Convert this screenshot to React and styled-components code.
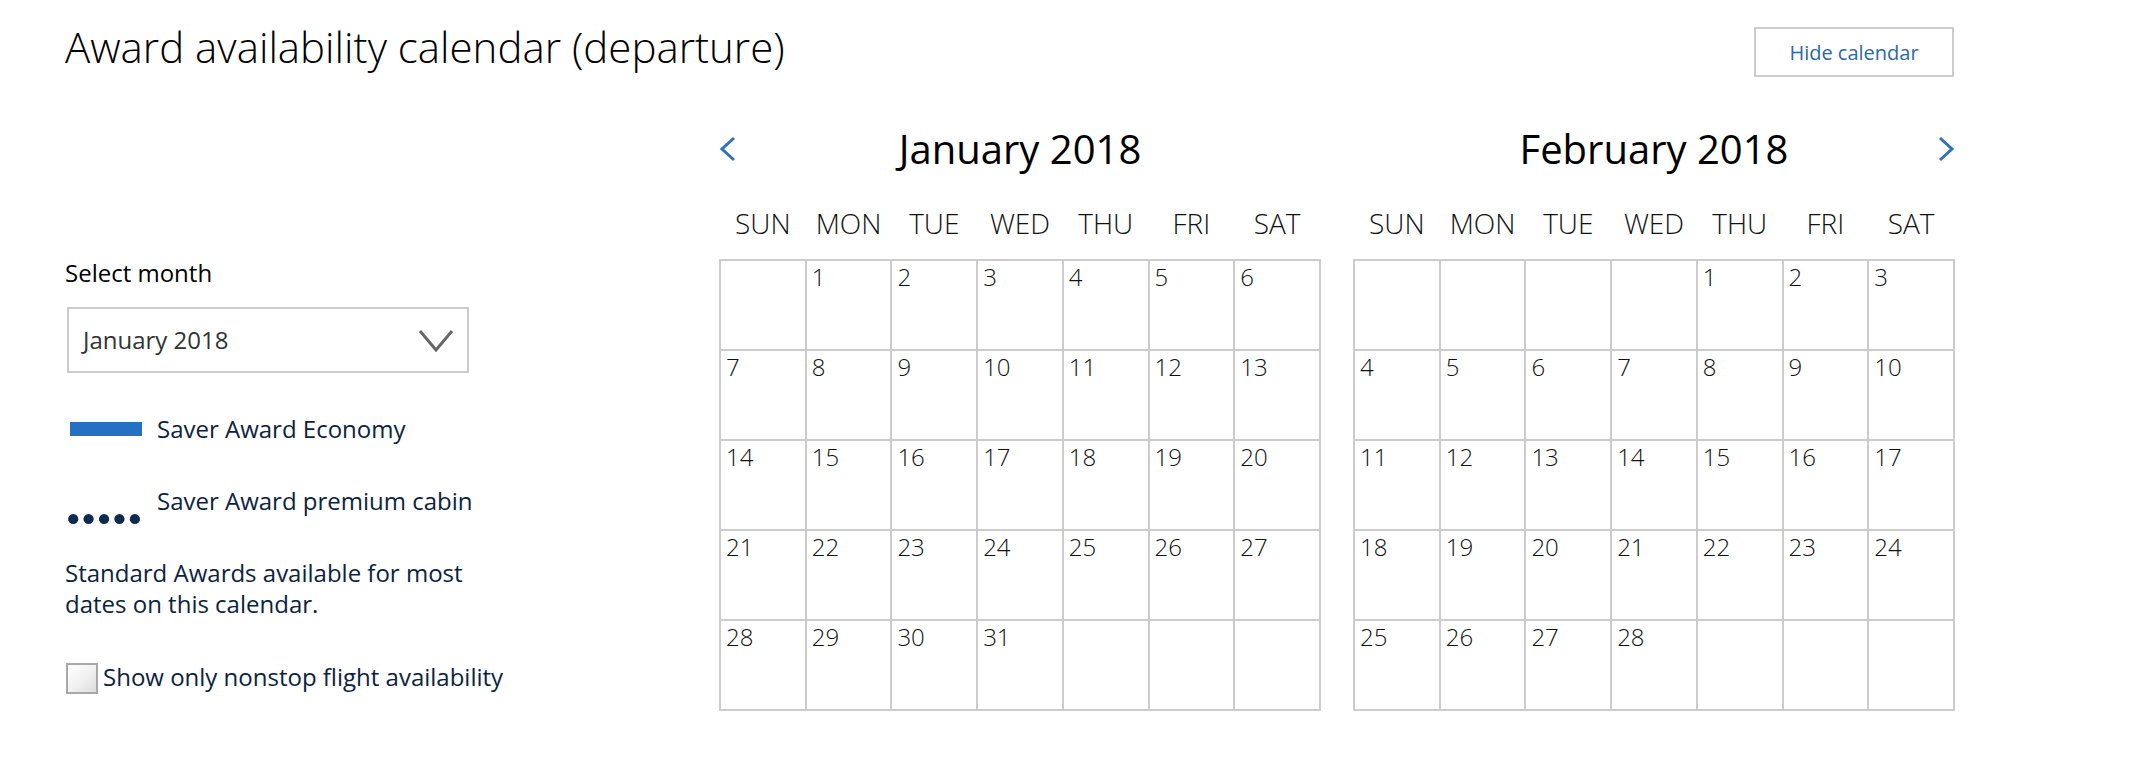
import React from "react";
import styled, { createGlobalStyle } from "styled-components";

const GlobalStyle = createGlobalStyle`
  html, body { margin: 0; padding: 0; background: #fff; }
  body { font-family: "Open Sans", "Liberation Sans", Arial, sans-serif; color: #000; }
  * { box-sizing: border-box; }
`;

const Page = styled.div`
  width: 2130px;
  padding: 23px 176px 0 65px;
`;

const Header = styled.header`
  display: flex;
  justify-content: space-between;
  align-items: flex-start;
`;

const Title = styled.h1`
  margin: 0;
  font-size: 42px;
  line-height: 48px;
  font-weight: 300;
  color: #000;
`;

const HideButton = styled.button`
  margin-top: 4px;
  width: 200px;
  height: 50px;
  border: 2px solid #cccccc;
  background: #fff;
  color: #2c68a8;
  font-family: "Open Sans", "Liberation Sans", Arial, sans-serif;
  font-size: 20px;
  padding: 0;
  cursor: pointer;
`;

const Body = styled.div`
  display: grid;
  grid-template-columns: 654px 1fr;
  margin-top: 45px;
`;

const Sidebar = styled.aside`
  display: flex;
  flex-direction: column;
  padding-top: 135px;
`;

const Label = styled.div`
  font-size: 24px;
  line-height: 32px;
  color: #000;
`;

const Select = styled.div`
  margin-top: 18px;
  margin-left: 2px;
  width: 402px;
  height: 66px;
  border: 2px solid #cccccc;
  display: flex;
  align-items: center;
  justify-content: space-between;
  padding: 0 13px 0 14px;
  font-size: 24px;
  line-height: 32px;
  color: #333;
`;

const LegendRow = styled.div`
  display: flex;
  align-items: ${(p) => p.$align};
  margin-top: 40px;
  padding-left: 5px;
  font-size: 24px;
  line-height: 32px;
  color: #0c2340;
`;

const IconSlot = styled.div`
  width: 72px;
  margin-right: 15px;
  display: flex;
  margin-bottom: ${(p) => p.$drop || 0}px;
`;

const Bar = styled.div`
  width: 72px;
  height: 14px;
  background: #2470c2;
`;

const Note = styled.p`
  margin: 40px 0 0;
  max-width: 420px;
  font-size: 24px;
  line-height: 31px;
  color: #0c2340;
`;

const CheckRow = styled.label`
  display: flex;
  align-items: center;
  margin-top: 41px;
  font-size: 24px;
  line-height: 32px;
  color: #0c2340;
  gap: 5px;
`;

const CheckBox = styled.span`
  display: inline-block;
  width: 32px;
  height: 31px;
  margin-left: 1px;
  margin-top: 3px;
  border: 2px solid #a8a8a8;
  background: linear-gradient(135deg, #ffffff 0%, #f2f2f2 50%, #dcdcdc 100%);
`;

const Calendars = styled.section`
  display: flex;
  gap: 32px;
`;

const Month = styled.div`
  width: 602px;
`;

const MonthHead = styled.div`
  display: grid;
  grid-template-columns: 20px 1fr 20px;
  align-items: center;
  height: 54px;
`;

const MonthName = styled.h2`
  margin: 0;
  text-align: center;
  font-size: 40px;
  line-height: 54px;
  font-weight: 400;
  color: #000;
`;

const Arrow = styled.button`
  border: 0;
  background: none;
  padding: 0;
  width: 18px;
  height: 26px;
  display: flex;
  justify-self: ${(p) => (p.$side === "right" ? "end" : "start")};
  cursor: pointer;
`;

const Weekdays = styled.div`
  display: grid;
  grid-template-columns: repeat(7, 1fr);
  padding-left: 2px;
  margin-top: 28px;
`;

const Weekday = styled.div`
  text-align: center;
  font-size: 28px;
  line-height: 38px;
  font-weight: 300;
  color: #111;
  padding-right: 2px;
`;

const Grid = styled.div`
  margin-top: 17px;
  display: grid;
  grid-template-columns: repeat(7, 1fr);
  grid-auto-rows: 90px;
  border-top: 2px solid #cccccc;
  border-left: 2px solid #cccccc;
`;

const Cell = styled.div`
  border-right: 2px solid #cccccc;
  border-bottom: 2px solid #cccccc;
  padding-left: 5px;
  font-size: 24px;
  line-height: 32px;
  font-weight: 300;
  color: #111;
`;

const Chevron = () => (
  <svg width="36" height="24" viewBox="0 0 36 24">
    <polyline points="2,3 18,22 34,3" fill="none" stroke="#666" strokeWidth="3" />
  </svg>
);

const NavArrow = ({ dir }) => (
  <svg width="18" height="26" viewBox="0 0 18 26">
    <polyline
      points={dir === "left" ? "15,2 3,13 15,24" : "3,2 15,13 3,24"}
      fill="none"
      stroke="#2f72b8"
      strokeWidth="3"
    />
  </svg>
);

const Dots = () => (
  <svg width="78" height="12" viewBox="0 0 78 12" style={{ marginLeft: -2 }}>
    {[5.5, 21.7, 38, 54.2, 70.5].map((cx) => (
      <circle key={cx} cx={cx} cy="6" r="5.4" fill="#0f2a50" />
    ))}
  </svg>
);

const WEEKDAYS = ["SUN", "MON", "TUE", "WED", "THU", "FRI", "SAT"];

const MONTHS = [
  { name: "January 2018", offset: 1, days: 31, nav: "left" },
  { name: "February 2018", offset: 4, days: 28, nav: "right" },
];

function buildCells(offset, days) {
  const cells = [];
  for (let i = 0; i < offset; i++) cells.push(null);
  for (let d = 1; d <= days; d++) cells.push(d);
  while (cells.length % 7 !== 0) cells.push(null);
  return cells;
}

function MonthView({ month }) {
  const cells = buildCells(month.offset, month.days);
  return (
    <Month>
      <MonthHead>
        {month.nav === "left" ? (
          <Arrow $side="left" aria-label="Previous month">
            <NavArrow dir="left" />
          </Arrow>
        ) : (
          <span />
        )}
        <MonthName>{month.name}</MonthName>
        {month.nav === "right" ? (
          <Arrow $side="right" aria-label="Next month">
            <NavArrow dir="right" />
          </Arrow>
        ) : (
          <span />
        )}
      </MonthHead>
      <Weekdays>
        {WEEKDAYS.map((w) => (
          <Weekday key={w}>{w}</Weekday>
        ))}
      </Weekdays>
      <Grid>
        {cells.map((d, i) => (
          <Cell key={i}>{d}</Cell>
        ))}
      </Grid>
    </Month>
  );
}

export default function App() {
  return (
    <>
      <GlobalStyle />
      <Page>
        <Header>
          <Title>Award availability calendar (departure)</Title>
          <HideButton>Hide calendar</HideButton>
        </Header>
        <Body>
          <Sidebar>
            <Label>Select month</Label>
            <Select>
              <span>January 2018</span>
              <Chevron />
            </Select>
            <LegendRow $align="center">
              <IconSlot>
                <Bar />
              </IconSlot>
              <span>Saver Award Economy</span>
            </LegendRow>
            <LegendRow $align="flex-end">
              <IconSlot $drop={-8}>
                <Dots />
              </IconSlot>
              <span>Saver Award premium cabin</span>
            </LegendRow>
            <Note>Standard Awards available for most dates on this calendar.</Note>
            <CheckRow>
              <CheckBox />
              <span>Show only nonstop flight availability</span>
            </CheckRow>
          </Sidebar>
          <Calendars>
            {MONTHS.map((m) => (
              <MonthView key={m.name} month={m} />
            ))}
          </Calendars>
        </Body>
      </Page>
    </>
  );
}
